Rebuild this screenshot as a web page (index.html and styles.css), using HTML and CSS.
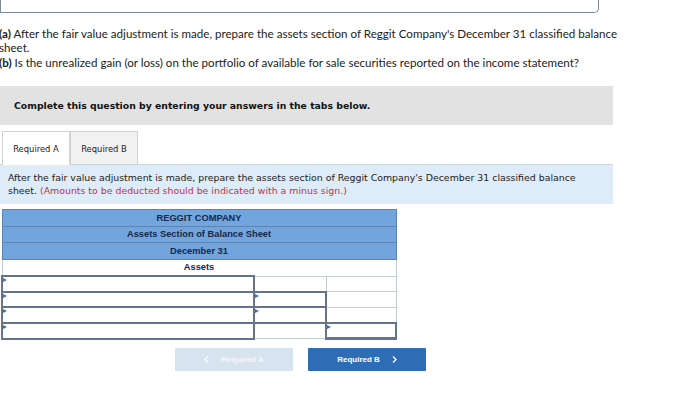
FILE: index.html
```html
<!DOCTYPE html>
<html lang="en">
<head>
  <meta charset="UTF-8">
  <title>Reggit Company</title>
  <link rel="stylesheet" href="styles.css">
</head>
<body>
  <div class="topbox"></div>

  <div class="question">
    <p><b>(a)</b> After the fair value adjustment is made, prepare the assets section of Reggit Company's December 31 classified balance sheet.</p>
    <p><b>(b)</b> Is the unrealized gain (or loss) on the portfolio of available for sale securities reported on the income statement?</p>
  </div>

  <div class="notice">Complete this question by entering your answers in the tabs below.</div>

  <div class="tabs">
    <div class="tab active">Required A</div>
    <div class="tab">Required B</div>
  </div>

  <div class="instructions">
    After the fair value adjustment is made, prepare the assets section of Reggit Company's December 31 classified balance sheet. <span class="red">(Amounts to be deducted should be indicated with a minus sign.)</span>
  </div>

  <table class="sheet">
    <tr class="head"><td colspan="3">REGGIT COMPANY</td></tr>
    <tr class="head"><td colspan="3">Assets Section of Balance Sheet</td></tr>
    <tr class="head"><td colspan="3">December 31</td></tr>
    <tr class="sub"><td colspan="3">Assets</td></tr>
    <tr class="row"><td class="c1 in"></td><td class="c2"></td><td class="c3"></td></tr>
    <tr class="row"><td class="c1 in"></td><td class="c2 in"></td><td class="c3"></td></tr>
    <tr class="row"><td class="c1 in"></td><td class="c2 in"></td><td class="c3"></td></tr>
    <tr class="row"><td class="c1 in"></td><td class="c2"></td><td class="c3 in total"></td></tr>
  </table>

  <div class="nav">
    <button class="btn disabled">
      <svg width="5" height="7" viewBox="0 0 5 7"><path d="M4 0.5 L1 3.5 L4 6.5" fill="none" stroke="currentColor" stroke-width="1.3"/></svg>
      <span>Required A</span>
    </button>
    <button class="btn">
      <span>Required B</span>
      <svg width="5" height="7" viewBox="0 0 5 7"><path d="M1 0.5 L4 3.5 L1 6.5" fill="none" stroke="currentColor" stroke-width="1.3"/></svg>
    </button>
  </div>
</body>
</html>
```

FILE: styles.css
```css
body { margin: 0; background: #fff; font-family: Lato, "Liberation Sans", sans-serif; color: #222; }

.topbox { width: 597px; height: 12px; border: 1px solid #7d8b9c; border-top: none; border-radius: 0 0 5px 0; }

.question { padding-top: 14px; margin-left: -1px; font-size: 11.6px; line-height: 14px; width: 622px; }
.question p { margin: 0; }
.question p + p { margin-top: 1px; }

.notice { margin-top: 16px; width: 599px; height: 39px; padding-left: 14px; background: #e2e2e2; font-family: "DejaVu Sans", Verdana, sans-serif; font-weight: bold; font-size: 9.3px; line-height: 39px; color: #111; }

.tabs { display: flex; margin-top: 6px; padding-left: 2px; height: 33px; border-bottom: 1px solid #cfd4d8; width: 611px; }
.tab { width: 66px; height: 32px; border: 1px solid #d2d2d2; border-bottom: none; background: #f1f1f1; font-family: "DejaVu Sans", Verdana, sans-serif; font-size: 8.4px; line-height: 34px; text-align: center; color: #222; }
.tab.active { background: #fff; margin-bottom: -1px; height: 33px; }

.instructions { width: 613px; height: 39px; padding: 7px 30px 0 8px; box-sizing: border-box; background: #deebf8; font-family: "DejaVu Sans", Verdana, sans-serif; font-size: 9.4px; line-height: 12.5px; color: #222; }
.red { color: #c0334b; }

.sheet { margin: 5px 0 0 1px; width: 396px; border-collapse: collapse; font-family: "Liberation Sans", Arial, sans-serif; font-size: 9.3px; font-weight: bold; color: #15284a; }
.sheet td { height: 15.5px; padding: 0; border: 1px solid #c4ccd4; text-align: center; }
.sheet .row td { height: 13.5px; }
.sheet .head td { background: #72a5de; border-color: #5b84b3; }
.sheet .sub td { background: #fff; }
.sheet .c1 { width: 250px; }
.sheet .c2 { width: 70px; }
.sheet td.in { border: 2px solid #64758b; position: relative; }
.sheet td.in::before { content: ""; position: absolute; left: 0; top: 1px; border-left: 4px solid #3e6fb0; border-top: 2.5px solid transparent; border-bottom: 2.5px solid transparent; }
.sheet td.total { border-bottom-width: 3px; }

.nav { display: flex; gap: 15px; margin: 8px 0 0 175px; }
.btn { display: flex; align-items: center; justify-content: center; gap: 12px; width: 118px; height: 23px; border: none; border-radius: 1px; background: #2e6cb6; color: #fff; font-family: "Liberation Sans", Arial, sans-serif; font-weight: bold; font-size: 8px; }
.btn.disabled { background: #d8e3f0; color: #f4f7fb; }
```
